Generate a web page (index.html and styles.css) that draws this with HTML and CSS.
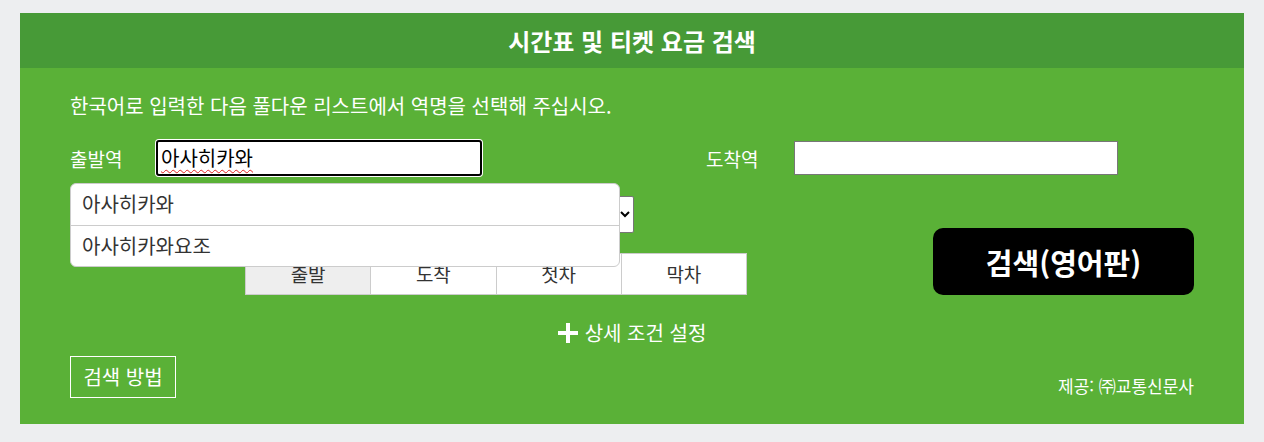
FILE: index.html
```html
<!DOCTYPE html>
<html lang="ko">
<head>
	<meta charset="UTF-8">
	<title>시간표 및 티켓 요금 검색</title>
	<link rel="stylesheet" href="styles.css">
</head>
<body>
	<div id="panel">
		<h2 class="panel-head">시간표 및 티켓 요금 검색</h2>
		<div class="panel-body">
			<p class="notice">한국어로 입력한 다음 풀다운 리스트에서 역명을 선택해 주십시오.</p>
			<div class="station-row">
				<div class="field field-from">
					<label class="field-label">출발역</label>
					<div class="text-box focused"><span class="typo">아사히카와</span></div>
				</div>
				<div class="field">
					<label class="field-label label-to">도착역</label>
					<div class="text-box"></div>
				</div>
			</div>
			<div class="option-row">
				<div class="option-left">
					<div class="date-line">
						<select class="date-select">
							<option>2024년 5월 20일</option>
						</select>
					</div>
					<ul class="tab">
						<li class="selected">출발</li>
						<li>도착</li>
						<li>첫차</li>
						<li>막차</li>
					</ul>
				</div>
				<button class="search-btn">검색(영어판)</button>
			</div>
			<div class="detail">
				<svg width="20" height="20" viewBox="0 0 20 20"><path d="M8 0h4v8h8v4h-8v8H8v-8H0V8h8z" fill="#fff"/></svg>
				<span>상세 조건 설정</span>
			</div>
			<div class="foot-row">
				<a class="howto">검색 방법</a>
				<span class="credit">제공: ㈜교통신문사</span>
			</div>
			<ul class="suggest">
				<li>아사히카와</li>
				<li>아사히카와요조</li>
			</ul>
		</div>
	</div>
</body>
</html>
```

FILE: styles.css
```css
*{
	margin: 0;
	padding: 0;
	box-sizing: border-box;
}
ul,ol{
	list-style: none;
}
body{
	background-color: #edeef0;
	padding: 13px 20px 18px;
	font-family: "Noto Sans CJK KR", "Noto Sans", sans-serif;
	color: #fff;
}
#panel{
	background-color: #5ab137;
}
.panel-head{
	height: 55px;
	line-height: 55px;
	background-color: #479a37;
	text-align: center;
	font-size: 24px;
	font-weight: bold;
}
.panel-body{
	position: relative;
	padding: 24px 50px 26px;
}
.notice{
	font-size: 20px;
	line-height: 28px;
}
.station-row{
	display: flex;
	margin-top: 20px;
}
.field{
	display: flex;
	align-items: center;
}
.field-from{
	width: 636px;
}
.field-label{
	width: 86px;
	font-size: 19px;
}
.label-to{
	width: 88px;
}
.text-box{
	width: 324px;
	height: 34px;
	background-color: #fff;
	border: 1px solid #777;
	color: #000;
	font-size: 20px;
	line-height: 32px;
	padding: 0 3px;
}
.text-box.focused{
	width: 326px;
	height: 36px;
	border: 2px solid #000;
	border-radius: 3px;
	box-shadow: 0 0 0 1px #fff;
}
.typo{
	text-decoration: underline wavy #e02020;
	text-decoration-thickness: 1px;
	text-underline-offset: 3px;
}
.option-row{
	display: flex;
	justify-content: space-between;
	align-items: flex-end;
	margin-top: 20px;
}
.date-line{
	padding-left: 86px;
}
.date-select{
	width: 478px;
	height: 37px;
	font-size: 15px;
	font-family: inherit;
	border: 1px solid #767676;
	border-radius: 2px;
	background-color: #fff;
}
.tab{
	display: flex;
	margin: 20px 0 0 175px;
	width: 502px;
	background-color: #fff;
	border: 1px solid #ccc;
}
.tab li{
	flex: 1;
	height: 40px;
	line-height: 40px;
	text-align: center;
	color: #333;
	font-size: 19px;
	border-left: 1px solid #ccc;
}
.tab li:first-child{
	border-left: none;
}
.tab .selected{
	background-color: #eee;
}
.search-btn{
	width: 261px;
	height: 67px;
	background-color: #000;
	color: #fff;
	border: none;
	border-radius: 10px;
	font-family: inherit;
	font-size: 29px;
	font-weight: bold;
}
.detail{
	display: flex;
	justify-content: center;
	align-items: center;
	gap: 7px;
	margin-top: 25px;
	font-size: 20px;
	line-height: 26px;
}
.foot-row{
	display: flex;
	justify-content: space-between;
	align-items: flex-end;
	margin-top: 10px;
}
.howto{
	display: block;
	width: 106px;
	height: 42px;
	line-height: 40px;
	border: 1px solid #fff;
	text-align: center;
	font-size: 20px;
}
.credit{
	font-size: 17px;
	line-height: 20px;
	margin-bottom: 2px;
}
.suggest{
	position: absolute;
	left: 50px;
	top: 115px;
	width: 550px;
	background-color: #fff;
	border: 1px solid #ccc;
	border-radius: 6px;
	color: #333;
}
.suggest li{
	height: 41px;
	line-height: 40px;
	padding-left: 11px;
	font-size: 20px;
}
.suggest li + li{
	border-top: 1px solid #ccc;
}
```
